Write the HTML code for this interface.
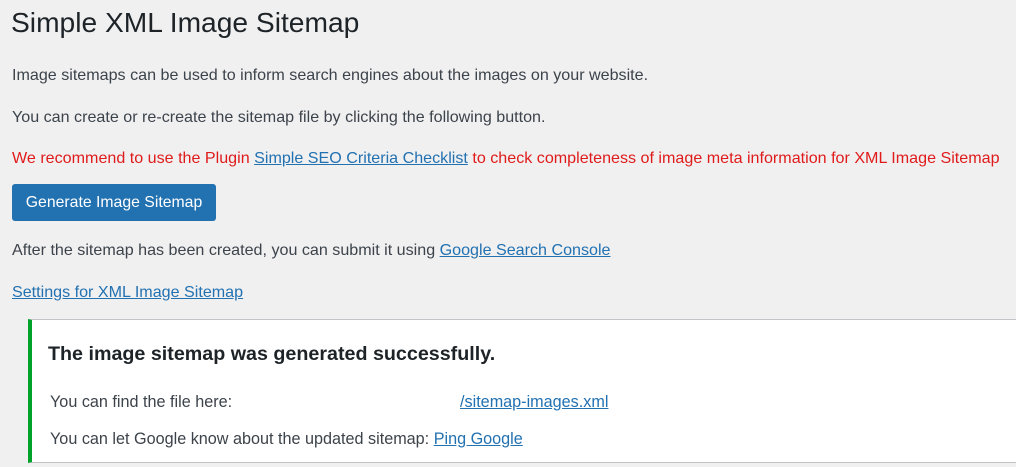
<!DOCTYPE html>
<html><head><meta charset="utf-8"><style>
body{margin:0;background:#f0f0f1;width:1016px;height:467px;overflow:hidden;font-family:"Liberation Sans",sans-serif;color:#3c434a;font-size:16.1px}
.a{position:absolute;white-space:nowrap}
a{color:#2271b1;text-decoration:underline}
h1{position:absolute;left:11px;top:6px;margin:0;font-weight:400;font-size:28.2px;color:#1d2327}
.btn{position:absolute;left:12px;top:184px;width:204px;height:37px;background:#2271b1;border-radius:3px;color:#fff;text-align:center;line-height:37px;font-size:15.8px}
.notice{position:absolute;left:28px;top:319px;width:1000px;height:144px;background:#fff;border:1px solid #c3c4c7;border-left:4px solid #00a32a;box-sizing:border-box}
</style></head><body>
<h1>Simple XML Image Sitemap</h1>
<div class="a" style="left:12px;top:66px">Image sitemaps can be used to inform search engines about the images on your website.</div>
<div class="a" style="left:12px;top:108px">You can create or re-create the sitemap file by clicking the following button.</div>
<div class="a" style="left:12px;top:149px;color:#e01b1b">We recommend to use the Plugin <a href="#">Simple SEO Criteria Checklist</a> to check completeness of image meta information for XML Image Sitemap</div>
<div class="btn">Generate Image Sitemap</div>
<div class="a" style="left:12px;top:241px">After the sitemap has been created, you can submit it using <a href="#">Google Search Console</a></div>
<div class="a" style="left:12px;top:283px"><a href="#">Settings for XML Image Sitemap</a></div>
<div class="notice"></div>
<div class="a" style="left:48px;top:343px;font-size:19.7px;font-weight:700;color:#1d2327">The image sitemap was generated successfully.</div>
<div class="a" style="left:50px;top:393px;font-size:16.2px">You can find the file here:</div>
<div class="a" style="left:460px;top:393px;font-size:16.2px"><a href="#">/sitemap-images.xml</a></div>
<div class="a" style="left:50px;top:430px;font-size:16.2px">You can let Google know about the updated sitemap: <a href="#">Ping Google</a></div>
</body></html>
